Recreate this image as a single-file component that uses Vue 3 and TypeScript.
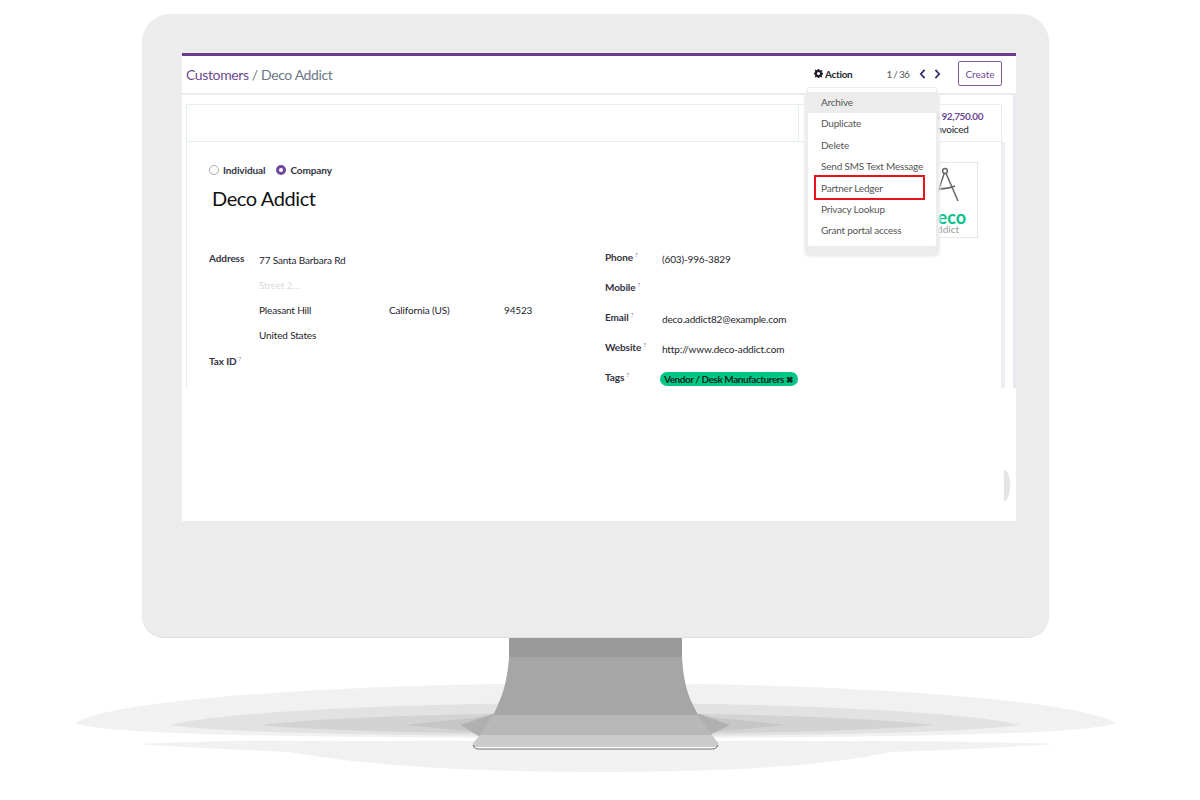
<script setup lang="ts">
interface Field {
  label: string;
  help?: boolean;
  value?: string;
}

const menuItems = [
  'Archive',
  'Duplicate',
  'Delete',
  'Send SMS Text Message',
  'Partner Ledger',
  'Privacy Lookup',
  'Grant portal access',
];

const contactFields: Field[] = [
  { label: 'Phone', help: true, value: '(603)-996-3829' },
  { label: 'Mobile', help: true },
  { label: 'Email', help: true, value: 'deco.addict82@example.com' },
  { label: 'Website', help: true, value: 'http://www.deco-addict.com' },
];
</script>

<template>
  <div class="stage">
    <div class="monitor">
      <div class="screen">
        <header class="control-panel">
          <div class="breadcrumb"><span class="crumb-link">Customers</span> / Deco Addict</div>
          <div class="actions">
            <div class="action-toggle">
              <svg class="gear" viewBox="0 0 16 16" width="9" height="9">
                <path fill="#1d1d2b" fill-rule="evenodd" d="M6.6 0h2.8l.4 2.2 1.2.5 1.9-1.3 2 2-1.3 1.9.5 1.2 2.2.4v2.8l-2.2.4-.5 1.2 1.3 1.9-2 2-1.9-1.3-1.2.5-.4 2.2H6.6l-.4-2.2-1.2-.5-1.9 1.3-2-2 1.3-1.9-.5-1.2L-.3 9.4V6.6l2.2-.4.5-1.2L1.1 3.1l2-2L5 2.4l1.2-.5zM8 5.2a2.8 2.8 0 1 0 0 5.6 2.8 2.8 0 0 0 0-5.6z" />
              </svg>
              <span>Action</span>
            </div>
            <span class="pager">1 / 36</span>
            <svg class="chevron" viewBox="0 0 8 12" width="7" height="10">
              <path d="M6.5 1 2 6l4.5 5" fill="none" stroke="#3f2f70" stroke-width="2.2" />
            </svg>
            <svg class="chevron chevron-next" viewBox="0 0 8 12" width="7" height="10">
              <path d="M1.5 1 6 6l-4.5 5" fill="none" stroke="#3f2f70" stroke-width="2.2" />
            </svg>
            <button class="create-btn">Create</button>
          </div>
        </header>

        <div class="content">
          <div class="sheet">
            <div class="button-box">
              <div class="stat">
                <span class="stat-value">$ 92,750.00</span>
                <span class="stat-label">Invoiced</span>
              </div>
            </div>

            <div class="form">
              <div class="form-top">
                <div>
                  <div class="radios">
                    <span class="radio"></span><span class="radio-label">Individual</span>
                    <span class="radio radio-on"></span><span class="radio-label">Company</span>
                  </div>
                  <h1 class="partner-name">Deco Addict</h1>
                </div>
                <div class="logo">
                  <svg class="compass" viewBox="0 0 30 44" width="30" height="44">
                    <g fill="none" stroke="#666" stroke-width="1.5">
                      <circle cx="11" cy="6" r="2.4" />
                      <path d="M10.2 8.2 4 27M12 8.2 24 36M5.5 24Q14 24 21 21" />
                    </g>
                  </svg>
                  <span class="logo-eco">deco</span>
                  <span class="logo-addict">addict</span>
                </div>
              </div>

              <div class="groups">
                <div class="address">
                  <div class="addr-row">
                    <span class="label">Address</span>
                    <span class="value">77 Santa Barbara Rd</span>
                  </div>
                  <div class="addr-row">
                    <span class="value placeholder">Street 2...</span>
                  </div>
                  <div class="addr-row">
                    <span class="value">Pleasant Hill</span>
                    <span class="value">California (US)</span>
                    <span class="value">94523</span>
                  </div>
                  <div class="addr-row">
                    <span class="value">United States</span>
                  </div>
                  <div class="addr-row tax-row">
                    <span class="label">Tax ID<sup>?</sup></span>
                  </div>
                </div>

                <div class="contact">
                  <div v-for="field in contactFields" :key="field.label" class="contact-row">
                    <span class="label">{{ field.label }}<sup v-if="field.help">?</sup></span>
                    <span class="value">{{ field.value }}</span>
                  </div>
                  <div class="contact-row">
                    <span class="label">Tags<sup>?</sup></span>
                    <span class="tag">Vendor / Desk Manufacturers <b>✖</b></span>
                  </div>
                </div>
              </div>
            </div>
          </div>
        </div>

        <div class="screen-fade">
          <span class="next-arc"></span>
        </div>

        <ul class="menu">
          <li
            v-for="(item, i) in menuItems"
            :key="item"
            :class="{ active: i === 0, marked: item === 'Partner Ledger' }"
          >
            {{ item }}
          </li>
        </ul>
      </div>
    </div>

    <svg class="stand" viewBox="0 0 1200 162" width="1200" height="162">
      <!-- y here is page y minus 638 -->
      <g transform="translate(0 -638)">
        <path d="M75 723C110 700 340 683 595 683C850 683 1080 700 1116 723C1090 733 950 738 595 738C240 738 100 733 75 723Z" fill="#f1f1f1" />
        <path d="M139 744Q230 740 300 741H890Q960 741 1055 744Q960 750 890 752Q800 772 600 772Q400 772 290 752Q210 749 139 744Z" fill="#f1f1f1" />
        <path d="M170 725C220 712 400 703 595 703C790 703 970 712 1020 725C970 733 800 736 595 736C390 736 220 733 170 725Z" fill="#e2e2e2" />
        <path d="M260 725C320 718 450 713 597 713C744 713 874 718 934 725C874 731 744 734 597 734C450 734 320 731 260 725Z" fill="#d3d3d3" />
        <path d="M405 725 490 716H700L786 725 700 733H490Z" fill="#c6c6c6" />
        <path d="M461 725 492 714H700L730 725 705 737H480Z" fill="#b0b0b0" />
        <clipPath id="stand-clip">
          <path d="M509 638H682V657C683 672 685 690 693 705C698 716 706 727 712 735L718 743V745C718 747 716 749 713 749H478C475 749 473 747 473 745V743L480 735C486 726 494 716 499 702C505 690 508 672 509 657Z" />
        </clipPath>
        <g clip-path="url(#stand-clip)">
          <rect x="470" y="638" width="250" height="19" fill="#9a9a9a" />
          <rect x="470" y="657" width="250" height="58" fill="#a6a6a6" />
          <rect x="470" y="715" width="250" height="20" fill="#b8b8b8" />
          <rect x="470" y="735" width="250" height="12" fill="#cbcbcb" />
          <rect x="470" y="747" width="250" height="2" fill="#ffffff" />
        </g>
        <path d="M473 745c1 3 3 4 6 4h233c3 0 5-1 6-4" fill="none" stroke="#6e6e6e" stroke-width="1" />
      </g>
    </svg>
  </div>
</template>

<style scoped>
.stage {
  width: 1200px;
  height: 800px;
  padding-top: 14px;
  box-sizing: border-box;
  background: #fff;
  overflow: hidden;
  font-family: Lato, "Noto Sans", sans-serif;
  font-size: 10px;
  color: #212529;
}

.monitor {
  width: 907px;
  height: 624px;
  margin-left: 142px;
  padding: 39px 33px 117px 40px;
  box-sizing: border-box;
  background: #ececec;
  border-radius: 28px 28px 22px 22px;
  border-bottom: 1px solid #dedede;
}

.screen {
  position: relative;
  width: 834px;
  height: 468px;
  background: #fff;
  border-top: 3px solid #6b3d8c;
  box-sizing: border-box;
  overflow: hidden;
}

.control-panel {
  height: 39px;
  box-sizing: border-box;
  display: flex;
  align-items: center;
  justify-content: space-between;
  padding: 0 14px 0 4px;
  border-bottom: 2px solid #e8eded;
}

.breadcrumb {
  margin-bottom: 1px;
  font-size: 14px;
  letter-spacing: -0.38px;
  color: #6b7785;
}

.crumb-link {
  color: #6c4a93;
}

.actions {
  display: flex;
  align-items: center;
  margin-bottom: 2px;
}

.action-toggle {
  display: flex;
  align-items: center;
  gap: 2px;
  font-weight: 700;
  letter-spacing: -0.3px;
  color: #262634;
  margin-right: 34px;
}

.pager {
  color: #555;
  letter-spacing: -0.75px;
  margin-right: 10px;
}

.chevron-next {
  margin-left: 8px;
  margin-right: 17px;
}

.create-btn {
  width: 44px;
  height: 25px;
  padding: 0;
  background: #fff;
  border: 1px solid #7f5f9c;
  border-radius: 2px;
  color: #6c4a93;
  font: inherit;
}

.content {
  height: 293px;
  padding: 9px 0 0 4px;
  box-sizing: border-box;
  border-right: 3px solid #e8eaf0;
}

.sheet {
  width: 816px;
  height: 284px;
  box-sizing: border-box;
  border: 1px solid #e6eff0;
  border-bottom: 0;
}

.button-box {
  height: 36px;
  display: flex;
  justify-content: flex-end;
  border-bottom: 1px solid #e3eff0;
}

.stat {
  width: 203px;
  box-sizing: border-box;
  border-left: 1px solid #e3eff0;
  padding: 5px 0 0 135px;
  display: flex;
  flex-direction: column;
  line-height: 13px;
  letter-spacing: -0.3px;
  white-space: nowrap;
}

.stat-value {
  color: #6c4a93;
  font-weight: 700;
  letter-spacing: -0.4px;
}

.form {
  height: 248px;
  margin-right: -4px;
  padding: 19px 0 0 22px;
  box-sizing: border-box;
  border-right: 4px solid #eceef3;
}

.form-top {
  display: flex;
  justify-content: space-between;
  height: 86px;
}

.radios {
  display: flex;
  align-items: center;
  height: 18px;
  font-weight: 700;
  letter-spacing: -0.1px;
  color: #33333f;
}

.radio {
  width: 10px;
  height: 10px;
  box-sizing: border-box;
  border: 1px solid #a9a9a9;
  border-radius: 50%;
  margin-right: 4px;
}

.radio-on {
  margin-left: 1px;
  border: 3px solid #70489a;
}

.radio-label {
  margin-right: 10px;
}

.partner-name {
  margin: 5px 0 0 3px;
  font-size: 20px;
  font-weight: 400;
  letter-spacing: -0.4px;
  color: #111;
  line-height: 28px;
}

.logo {
  width: 73px;
  height: 76px;
  margin: 1px 23px 0 0;
  box-sizing: border-box;
  border: 1px solid #dfeaea;
  display: flex;
  flex-direction: column;
  align-items: flex-end;
  padding: 2px 11px 0 0;
}

.compass {
  flex: none;
  margin-right: 2px;
}

.logo-eco {
  color: #00c389;
  font-size: 18px;
  font-weight: 700;
  line-height: 16px;
}

.logo-addict {
  margin-right: 7px;
  color: #9a9a9a;
  font-size: 10px;
  line-height: 8px;
}

.groups {
  display: grid;
  grid-template-columns: 396px 1fr;
}

.label {
  padding-bottom: 4px;
  font-weight: 700;
  letter-spacing: -0.1px;
  color: #33333f;
}

.label sup {
  font-size: 6px;
  color: #7c6c94;
  margin-left: 2px;
  font-weight: 400;
}

.value {
  letter-spacing: -0.15px;
  color: #24242a;
}

.placeholder {
  color: #dcdcdc;
}

.address {
  display: flex;
  flex-direction: column;
}

.addr-row {
  display: grid;
  grid-template-columns: 50px 130px 115px 1fr;
  align-items: center;
  height: 25px;
}

.addr-row > .value:first-of-type {
  grid-column: 2;
}

.tax-row {
  height: 32px;
}

.contact {
  display: flex;
  flex-direction: column;
  margin-top: -3px;
}

.contact-row {
  display: grid;
  grid-template-columns: 57px 1fr;
  align-items: center;
  height: 30px;
}

.tag {
  justify-self: start;
  margin-left: -2px;
  height: 14px;
  line-height: 14px;
  padding: 0 4px;
  background: #00c784;
  border-radius: 7px;
  font-weight: 700;
  letter-spacing: -0.45px;
  color: #0b2a24;
  white-space: nowrap;
}

.tag b {
  font-size: 9px;
}

.screen-fade {
  position: relative;
  height: 133px;
  background: #fff;
}

.next-arc {
  position: absolute;
  right: 6px;
  top: 82px;
  width: 6px;
  height: 31px;
  background: #e4e4e4;
  box-shadow: 0 0 2px #e6f4fa;
  border-radius: 0 100% 100% 0 / 0 50% 50% 0;
}

.menu {
  position: absolute;
  left: 625px;
  top: 31px;
  width: 130px;
  height: 160px;
  margin: 0;
  padding: 4px 0 0;
  box-sizing: border-box;
  list-style: none;
  background: #fff;
  border: 1px solid #ececec;
  border-radius: 3px;
  box-shadow: 0 7px 3px 3px #ececec;
  color: #555;
}

.menu li {
  position: relative;
  height: 21.4px;
  line-height: 21.4px;
  padding-left: 13px;
  letter-spacing: -0.2px;
  white-space: nowrap;
}

.menu li.active {
  background: #ececec;
}

.menu li.marked::after {
  content: "";
  position: absolute;
  left: 6px;
  top: -3px;
  width: 111px;
  height: 25px;
  box-sizing: border-box;
  border: 2px solid #e8141c;
}

.stand {
  display: block;
}
</style>

<style>
html,
body {
  background: #fff;
}
</style>
